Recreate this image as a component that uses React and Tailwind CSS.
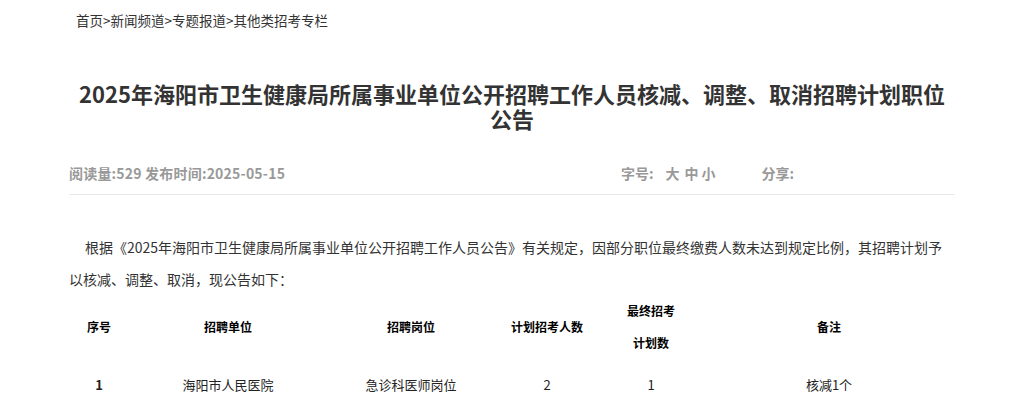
export default function App() {
  const font = { fontFamily: '"Noto Sans CJK SC", "Noto Sans", sans-serif' };
  const cols = ["w-[60px]", "w-[198px]", "w-[168px]", "w-[104px]", "w-[104px]", "w-[252px]"];
  return (
    <div className="bg-white min-h-[400px] font-['Noto_Sans_CJK_SC',sans-serif]" style={font}>
      <div className="w-[886px] mx-auto">
        <div className="pt-[10px] pl-[7px] text-[13.5px] leading-[20px] text-[#333]">
          首页&gt;新闻频道&gt;专题报道&gt;其他类招考专栏
        </div>
        <h1 className="mt-[51px] text-center text-[22px] leading-[25px] font-bold text-[#333]">
          2025年海阳市卫生健康局所属事业单位公开招聘工作人员核减、调整、取消招聘计划职位
          <br />
          公告
        </h1>
        <div className="mt-[32px] flex items-center pb-[11px] border-b border-[#e8e8e8] text-[14px] leading-[20px] font-bold text-[#999]">
          <div className="tracking-[0.2px]">阅读量:529 发布时间:2025-05-15</div>
          <div className="ml-auto w-[334px] flex items-center">
            <span>字号:</span>
            <span className="ml-[12px]">大</span>
            <span className="ml-[5px]">中</span>
            <span className="ml-[3px]">小</span>
            <span className="ml-[46px]">分享:</span>
          </div>
        </div>
        <p className="mt-[36px] text-[14px] leading-[32px] text-[#333] indent-[16px]">
          根据《2025年海阳市卫生健康局所属事业单位公开招聘工作人员公告》有关规定，因部分职位最终缴费人数未达到规定比例，其招聘计划予以核减、调整、取消，现公告如下：
        </p>
        <div className="flex h-[64px] items-center text-[12px] font-bold text-black text-center">
          <div className={cols[0]}>序号</div>
          <div className={cols[1]}>招聘单位</div>
          <div className={cols[2]}>招聘岗位</div>
          <div className={cols[3]}>计划招考人数</div>
          <div className={cols[4] + " leading-[32px]"}>
            最终招考
            <br />
            计划数
          </div>
          <div className={cols[5]}>备注</div>
        </div>
        <div className="flex h-[52px] items-center text-[13px] text-[#222] text-center">
          <div className={cols[0] + " font-bold"}>1</div>
          <div className={cols[1]}>海阳市人民医院</div>
          <div className={cols[2]}>急诊科医师岗位</div>
          <div className={cols[3]}>2</div>
          <div className={cols[4]}>1</div>
          <div className={cols[5]}>核减1个</div>
        </div>
      </div>
    </div>
  );
}
